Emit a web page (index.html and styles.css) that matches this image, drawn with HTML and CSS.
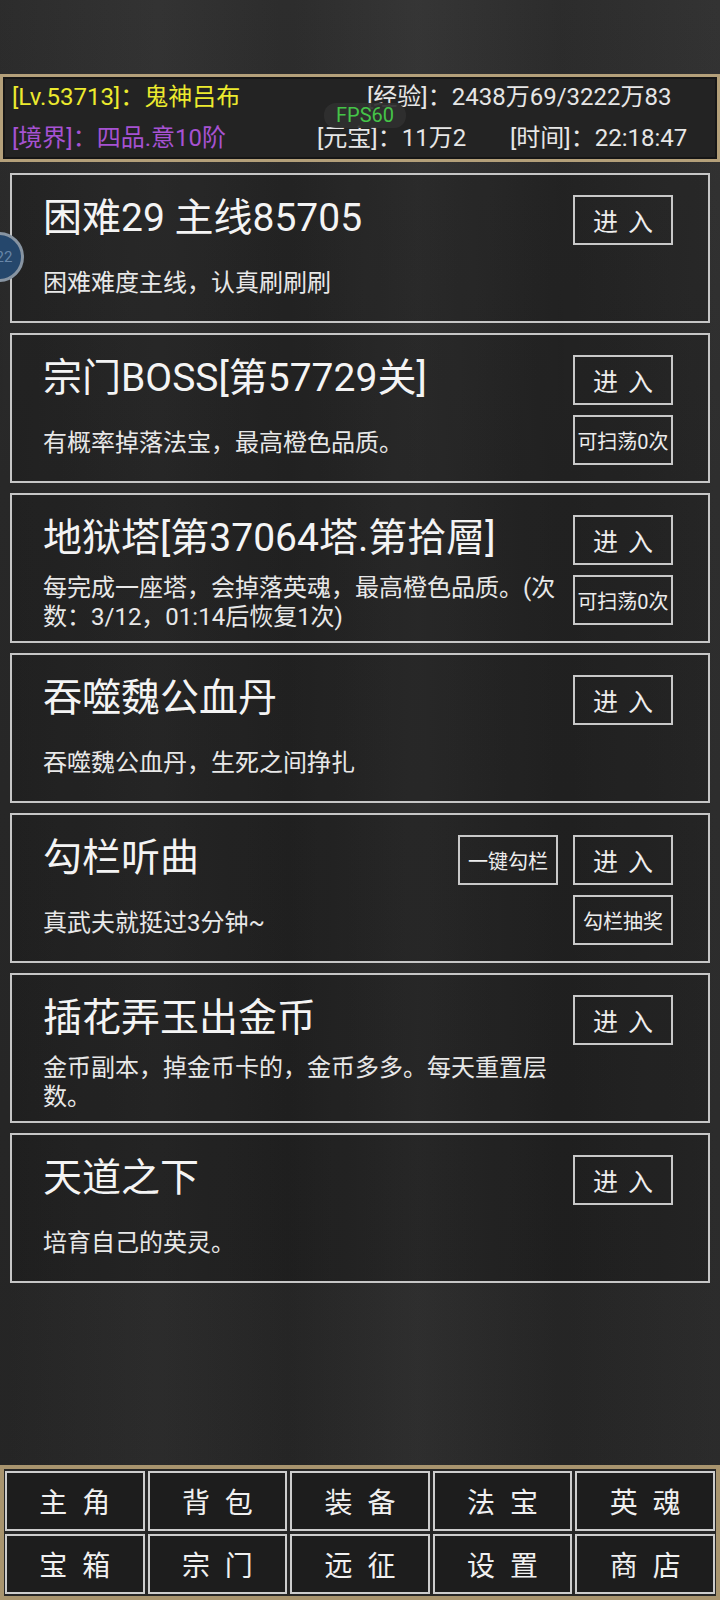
FILE: index.html
```html
<!DOCTYPE html>
<html lang="zh-CN">
<head>
<meta charset="utf-8">
<title>主线</title>
<link rel="stylesheet" href="styles.css">
</head>
<body>
<div class="app">
  <div class="top-space"></div>
  <header class="status">
    <div class="row">
      <span class="lv">[Lv.53713]：鬼神吕布</span>
      <span class="val">[经验]：2438万69/3222万83</span>
    </div>
    <div class="row">
      <span class="realm">[境界]：四品.意10阶</span>
      <span class="val gold">[元宝]：11万2</span>
      <span class="val">[时间]：22:18:47</span>
    </div>
    <div class="fps">FPS60</div>
  </header>

  <main class="list">
    <section class="card">
      <div class="info">
        <div class="title">困难29 主线85705</div>
        <div class="desc"><p>困难难度主线，认真刷刷刷</p></div>
      </div>
      <div class="actions">
        <div class="btn enter">进 入</div>
      </div>
    </section>

    <section class="card">
      <div class="info">
        <div class="title">宗门BOSS[第57729关]</div>
        <div class="desc"><p>有概率掉落法宝，最高橙色品质。</p></div>
      </div>
      <div class="actions">
        <div class="btn enter">进 入</div>
        <div class="btn">可扫荡0次</div>
      </div>
    </section>

    <section class="card">
      <div class="info">
        <div class="title">地狱塔[第37064塔.第拾層]</div>
        <div class="desc"><p>每完成一座塔，会掉落英魂，最高橙色品质。(次数：3/12，01:14后恢复1次)</p></div>
      </div>
      <div class="actions">
        <div class="btn enter">进 入</div>
        <div class="btn">可扫荡0次</div>
      </div>
    </section>

    <section class="card">
      <div class="info">
        <div class="title">吞噬魏公血丹</div>
        <div class="desc"><p>吞噬魏公血丹，生死之间挣扎</p></div>
      </div>
      <div class="actions">
        <div class="btn enter">进 入</div>
      </div>
    </section>

    <section class="card">
      <div class="info">
        <div class="title">勾栏听曲</div>
        <div class="desc"><p>真武夫就挺过3分钟~</p></div>
      </div>
      <div class="actions two">
        <div class="btn">一键勾栏</div>
        <div class="btn enter">进 入</div>
        <div class="btn col2">勾栏抽奖</div>
      </div>
    </section>

    <section class="card">
      <div class="info">
        <div class="title">插花弄玉出金币</div>
        <div class="desc"><p>金币副本，掉金币卡的，金币多多。每天重置层数。</p></div>
      </div>
      <div class="actions">
        <div class="btn enter">进 入</div>
      </div>
    </section>

    <section class="card">
      <div class="info">
        <div class="title">天道之下</div>
        <div class="desc"><p>培育自己的英灵。</p></div>
      </div>
      <div class="actions">
        <div class="btn enter">进 入</div>
      </div>
    </section>
  </main>

  <nav class="menu">
    <div class="nav-btn">主 角</div>
    <div class="nav-btn">背 包</div>
    <div class="nav-btn">装 备</div>
    <div class="nav-btn">法 宝</div>
    <div class="nav-btn">英 魂</div>
    <div class="nav-btn">宝 箱</div>
    <div class="nav-btn">宗 门</div>
    <div class="nav-btn">远 征</div>
    <div class="nav-btn">设 置</div>
    <div class="nav-btn">商 店</div>
  </nav>

  <div class="bubble">22</div>
</div>
</body>
</html>
```

FILE: styles.css
```css
html, body {
  margin: 0;
  padding: 0;
}

body {
  width: 720px;
  height: 1600px;
  overflow: hidden;
  background: #2a2a2a;
  font-family: Roboto, "Noto Sans CJK SC", "Noto Sans", sans-serif;
  color: #f0f0f0;
}

.app {
  position: relative;
  width: 720px;
  height: 1600px;
  display: flex;
  flex-direction: column;
  overflow: hidden;
  background:
    linear-gradient(90deg, rgba(0,0,0,0.06) 0%, rgba(255,255,255,0.02) 22%, rgba(0,0,0,0.05) 40%, rgba(255,255,255,0.03) 58%, rgba(0,0,0,0.06) 78%, rgba(255,255,255,0.02) 100%),
    linear-gradient(180deg, #2f2f2f 0%, #2a2a2a 30%, #282828 70%, #272727 100%);
}

.top-space {
  flex: none;
  height: 74px;
}

/* ---------- status header ---------- */
.status {
  position: relative;
  flex: none;
  height: 88px;
  box-sizing: border-box;
  border: 3px solid #b4a07a;
  box-shadow: inset 0 0 0 2px #161616;
  background: #232323;
  padding-left: 9px;
  display: grid;
  grid-template-rows: 41px 41px;
  font-size: 24px;
  line-height: 41px;
  white-space: nowrap;
}

.row {
  display: flex;
}

.lv {
  width: 355px;
  color: #ecea2e;
}

.realm {
  width: 305px;
  color: #a652d2;
}

.val {
  color: #e6e6e6;
}

.gold {
  width: 193px;
}

.fps {
  position: absolute;
  left: 321px;
  top: 26px;
  width: 82px;
  height: 25px;
  border-radius: 12px;
  background: rgba(48, 48, 48, 0.92);
  color: #45c448;
  font-family: Roboto, "Noto Sans", sans-serif;
  font-size: 20px;
  line-height: 25px;
  text-align: center;
}

/* ---------- card list ---------- */
.list {
  flex: 1;
  padding: 11px 10px 0;
  display: flex;
  flex-direction: column;
  gap: 10px;
}

.card {
  flex: none;
  height: 150px;
  box-sizing: border-box;
  border: 2px solid #c6c6c6;
  background: rgba(0, 0, 0, 0.17);
  padding: 0 35px 0 31px;
  display: flex;
  gap: 14px;
}

.info {
  flex: 1;
  min-width: 0;
  display: flex;
  flex-direction: column;
}

.title {
  height: 86px;
  line-height: 86px;
  font-size: 39px;
  color: #f4f4f4;
  white-space: nowrap;
}

.desc {
  height: 44px;
  display: flex;
  flex-direction: column;
  justify-content: center;
}

.desc p {
  margin: 0;
  font-size: 24px;
  line-height: 29px;
  color: #e8e8e8;
}

.actions {
  padding-top: 20px;
  display: grid;
  grid-template-columns: 100px;
  grid-auto-rows: 50px;
  row-gap: 10px;
  align-content: start;
}

.actions.two {
  grid-template-columns: 100px 100px;
  column-gap: 15px;
}

.actions.two .col2 {
  grid-column: 2;
}

.btn {
  box-sizing: border-box;
  border: 2px solid #c8c8c8;
  display: flex;
  align-items: center;
  justify-content: center;
  font-size: 20px;
  color: #ededed;
  white-space: nowrap;
}

.btn.enter {
  font-size: 25px;
  letter-spacing: 2px;
  text-indent: 2px;
}

/* ---------- bottom menu ---------- */
.menu {
  flex: none;
  height: 135px;
  box-sizing: border-box;
  border: 4px solid #a8946e;
  padding: 2px 1px;
  background: #262626;
  display: grid;
  grid-template-columns: repeat(5, 1fr);
  grid-template-rows: 60px 60px;
  gap: 3px;
}

.nav-btn {
  box-sizing: border-box;
  border: 2px solid #cdcdcd;
  background: #1d1d1d;
  display: flex;
  align-items: center;
  justify-content: center;
  font-size: 28px;
  letter-spacing: 4px;
  text-indent: 4px;
  color: #f0f0f0;
}

/* ---------- floating bubble ---------- */
.bubble {
  position: absolute;
  left: -26px;
  top: 232px;
  width: 50px;
  height: 50px;
  box-sizing: border-box;
  border: 3px solid #8794a2;
  border-radius: 50%;
  background: #25476c;
  color: #6886a8;
  font-family: Roboto, sans-serif;
  font-size: 15px;
  line-height: 44px;
  padding-left: 10px;
  text-align: center;
}
```
